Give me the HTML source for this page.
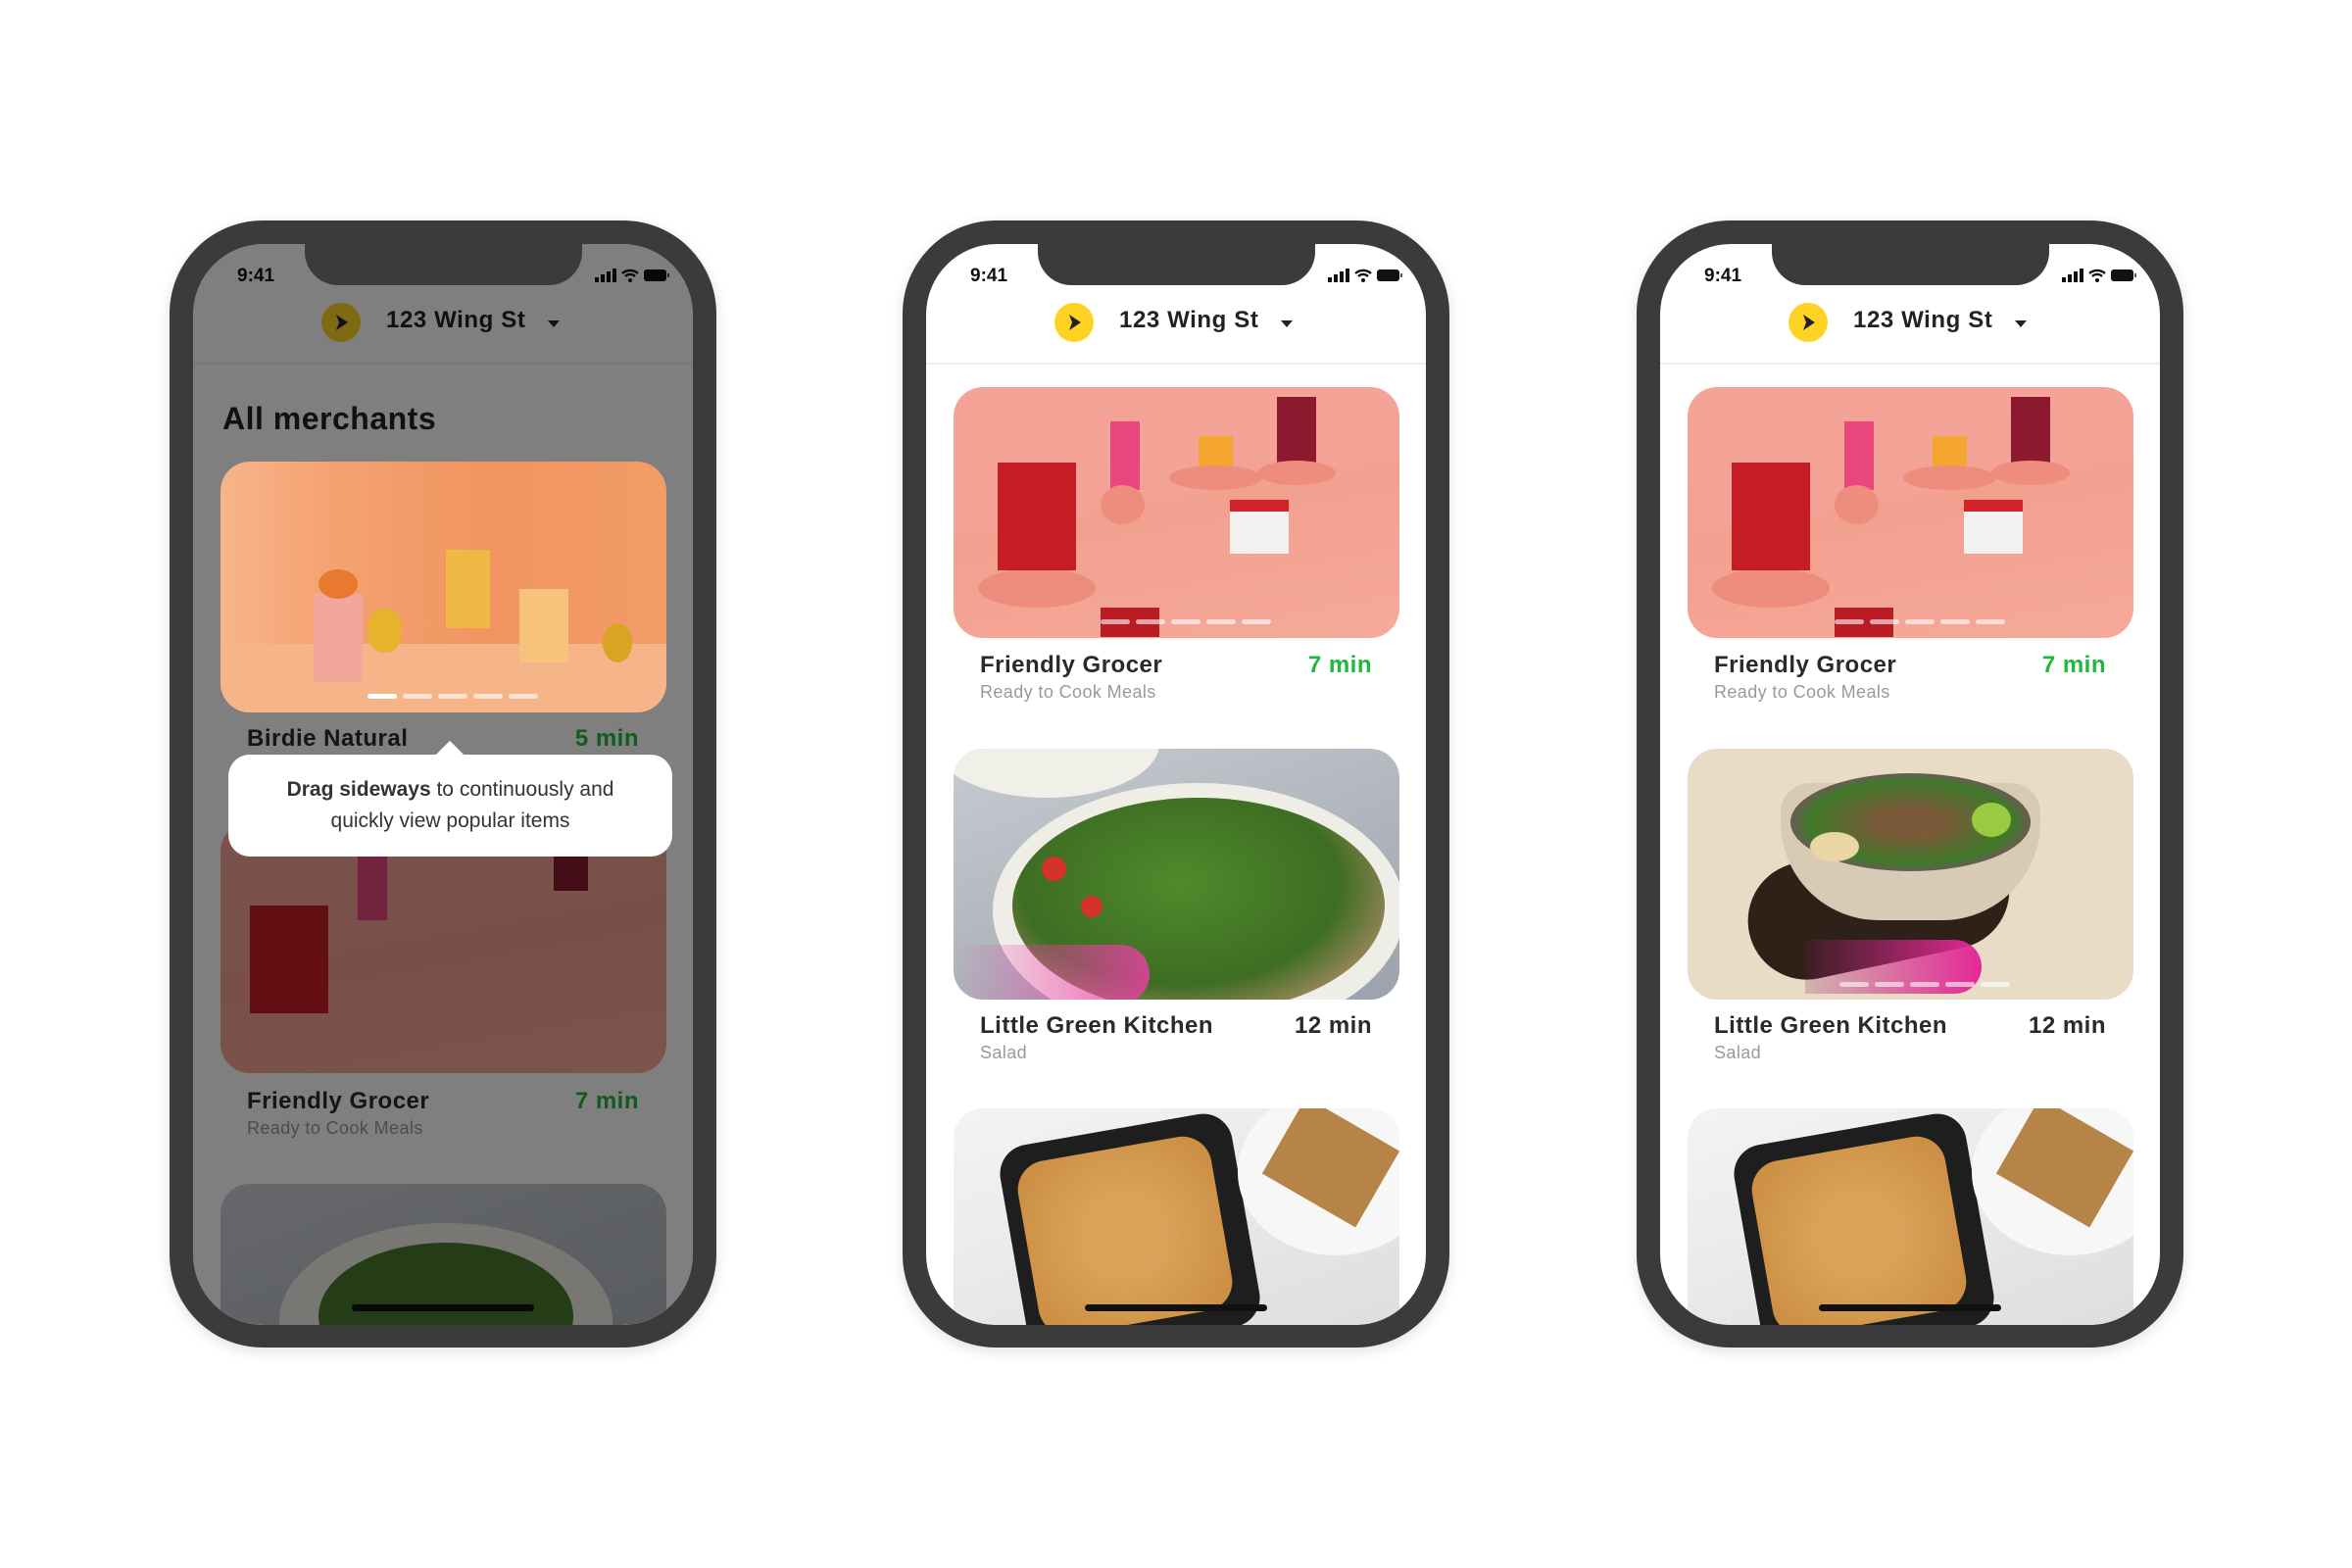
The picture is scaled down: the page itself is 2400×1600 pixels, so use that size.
<!DOCTYPE html>
<html><head><meta charset="utf-8"><style>
*{margin:0;padding:0;box-sizing:border-box}
body{width:2400px;height:1600px;background:#fff;position:relative;overflow:hidden;font-family:"Liberation Sans",sans-serif}
.phone{position:absolute;top:225px;width:558px;height:1150px;background:#3b3b3b;border-radius:95px;box-shadow:0 4px 14px rgba(0,0,0,.12)}
.screen{position:absolute;left:24px;top:24px;width:510px;height:1103px;background:#fff;border-radius:72px;overflow:hidden}
.notch{position:absolute;left:114px;top:-2px;width:283px;height:44px;background:#3b3b3b;border-radius:0 0 34px 34px;z-index:8}
.time{position:absolute;left:45px;top:22px;font-size:19px;font-weight:bold;color:#111}
.stat{position:absolute;right:24px;top:24px}
.logo{position:absolute;left:131px;top:60px;width:40px;height:40px;border-radius:50%;background:#ffd324}
.addr{position:absolute;left:197px;top:64px;font-size:24px;font-weight:bold;color:#222;letter-spacing:.6px}
.caret{position:absolute;left:362px;top:78px;width:0;height:0;border-left:6px solid transparent;border-right:6px solid transparent;border-top:7px solid #222}
.div{position:absolute;left:0;right:0;top:121px;height:2px;background:#eee}
.card{position:absolute;left:28px;width:455px;height:256px;border-radius:30px;overflow:hidden}
.t{position:absolute;left:55px;font-size:24px;font-weight:bold;color:#2a2a2a;letter-spacing:.5px}
.m{position:absolute;right:55px;font-size:24px;font-weight:bold;letter-spacing:.5px}
.s{position:absolute;left:55px;font-size:18px;color:#999;letter-spacing:.4px}
.home{position:absolute;left:162px;bottom:14px;width:186px;height:7px;border-radius:4px;background:#111;z-index:4}
.grocer{background:linear-gradient(170deg,#f4a397 0%,#f3a396 45%,#f2a08f 46%,#f6a99a 100%)}
.dots{position:absolute;left:150px;bottom:14px;display:flex;gap:6px}
.dots i{display:block;width:30px;height:5px;border-radius:3px;background:rgba(255,255,255,.6)}
</style></head><body>

<!-- Phone 1 -->
<div class="phone" style="left:173px">
 <div class="screen">
  <div class="notch"></div>
  <div class="time">9:41</div>
  <svg class="stat" width="76" height="16" viewBox="0 0 76 16"><rect x="0" y="10" width="4" height="5" fill="#111"/><rect x="6" y="7" width="4" height="8" fill="#111"/><rect x="12" y="4" width="4" height="11" fill="#111"/><rect x="18" y="1" width="4" height="14" fill="#111"/><path d="M28 6a12 12 0 0 1 16 0M31 9a7 7 0 0 1 10 0" stroke="#111" stroke-width="2.4" fill="none"/><circle cx="36" cy="13" r="2" fill="#111"/><rect x="50" y="2" width="23" height="12" rx="3" fill="#111"/><rect x="74" y="6" width="2" height="4" fill="#555"/></svg>
  <div class="logo"><svg width="40" height="40"><path d="M15 12l12 8-12 8 3-8z" fill="#222"/></svg></div>
  <div class="addr">123 Wing St</div><div class="caret"></div>
  <div class="div"></div>
  <div style="position:absolute;left:30px;top:160px;font-size:32px;font-weight:bold;color:#222;letter-spacing:.5px">All merchants</div>
  <div class="t" style="top:491px">Birdie Natural</div>
  <div class="m" style="top:491px;color:#1fb83c">5 min</div>
  <div class="card grocer" style="top:590px">
   <div style="position:absolute;left:30px;top:85px;width:80px;height:110px;background:#c51d25"></div>
   <div style="position:absolute;left:140px;top:20px;width:30px;height:80px;background:#e9467f"></div>
   <div style="position:absolute;left:340px;top:-10px;width:35px;height:80px;background:#8b1a2f"></div>
  </div>
  <div class="t" style="top:861px">Friendly Grocer</div>
  <div class="m" style="top:861px;color:#1fb83c">7 min</div>
  <div class="s" style="top:892px">Ready to Cook Meals</div>
  <div class="card" style="top:959px;background:linear-gradient(160deg,#ccd0d6,#a9afb8)">
   <div style="position:absolute;left:60px;top:40px;width:340px;height:200px;border-radius:50%;background:#f0efe8"></div>
   <div style="position:absolute;left:100px;top:60px;width:260px;height:150px;border-radius:50%;background:#4a7a2e"></div>
  </div>
  <div class="home"></div>
  <div style="position:absolute;inset:0;background:rgba(0,0,0,.5);z-index:6"></div>
  <div class="card" style="top:222px;z-index:7;background:linear-gradient(90deg,#f7b48a 0%,#f5a271 25%,#f19560 60%,#f39c68 100%)">
   <div style="position:absolute;left:0;right:0;bottom:0;height:70px;background:#f6b589"></div>
   <div style="position:absolute;left:95px;top:135px;width:50px;height:90px;background:#f3a69c"></div>
   <div style="position:absolute;left:100px;top:110px;width:40px;height:30px;border-radius:50%;background:#e8792e"></div>
   <div style="position:absolute;left:150px;top:150px;width:35px;height:45px;border-radius:45%;background:#e7b22c"></div>
   <div style="position:absolute;left:230px;top:90px;width:45px;height:80px;background:#efb948"></div>
   <div style="position:absolute;left:305px;top:130px;width:50px;height:75px;background:#f7c37c"></div>
   <div style="position:absolute;left:390px;top:165px;width:30px;height:40px;border-radius:50%;background:#d9a422"></div>
   <div class="dots" style="left:150px"><i style="background:#fff"></i><i></i><i></i><i></i><i></i></div>
  </div>
  <div style="position:absolute;left:36px;top:521px;width:453px;height:104px;background:#fff;border-radius:22px;z-index:7;text-align:center;font-size:21px;line-height:32px;color:#333;padding-top:20px"><b>Drag sideways</b> to continuously and<br>quickly view popular items
   <div style="position:absolute;left:216px;top:-10px;width:20px;height:20px;background:#fff;transform:rotate(45deg)"></div></div>
 </div>
</div>

<!-- Phone 2 -->
<div class="phone" style="left:921px">
 <div class="screen">
  <div class="notch"></div>
  <div class="time">9:41</div>
  <svg class="stat" width="76" height="16" viewBox="0 0 76 16"><rect x="0" y="10" width="4" height="5" fill="#111"/><rect x="6" y="7" width="4" height="8" fill="#111"/><rect x="12" y="4" width="4" height="11" fill="#111"/><rect x="18" y="1" width="4" height="14" fill="#111"/><path d="M28 6a12 12 0 0 1 16 0M31 9a7 7 0 0 1 10 0" stroke="#111" stroke-width="2.4" fill="none"/><circle cx="36" cy="13" r="2" fill="#111"/><rect x="50" y="2" width="23" height="12" rx="3" fill="#111"/><rect x="74" y="6" width="2" height="4" fill="#555"/></svg>
  <div class="logo"><svg width="40" height="40"><path d="M15 12l12 8-12 8 3-8z" fill="#222"/></svg></div>
  <div class="addr">123 Wing St</div><div class="caret"></div>
  <div class="div"></div>
  <div class="card grocer" style="top:146px">
   <div style="position:absolute;left:25px;top:185px;width:120px;height:40px;border-radius:50%;background:#ee8d7d"></div>
   <div style="position:absolute;left:45px;top:77px;width:80px;height:110px;background:#c51d25"></div>
   <div style="position:absolute;left:160px;top:35px;width:30px;height:70px;background:#e9467f"></div>
   <div style="position:absolute;left:150px;top:100px;width:45px;height:40px;border-radius:50%;background:#ee8d7d"></div>
   <div style="position:absolute;left:250px;top:50px;width:35px;height:35px;background:#f4a62f"></div>
   <div style="position:absolute;left:220px;top:80px;width:95px;height:25px;border-radius:50%;background:#ee8d7d"></div>
   <div style="position:absolute;left:330px;top:10px;width:40px;height:70px;background:#8b1a2f"></div>
   <div style="position:absolute;left:310px;top:75px;width:80px;height:25px;border-radius:50%;background:#ee8d7d"></div>
   <div style="position:absolute;left:282px;top:115px;width:60px;height:55px;background:#f3f0f0;border-top:12px solid #d2232a"></div>
   <div style="position:absolute;left:150px;top:225px;width:60px;height:30px;background:#b91c24"></div>
   <div class="dots" style="left:150px"><i></i><i></i><i></i><i></i><i></i></div>
  </div>
  <div class="t" style="top:416px">Friendly Grocer</div>
  <div class="m" style="top:416px;color:#1fb83c">7 min</div>
  <div class="s" style="top:447px">Ready to Cook Meals</div>
  <div class="card" style="top:515px;background:linear-gradient(160deg,#c7cbd1,#9ca2ab)">
   <div style="position:absolute;left:-20px;top:-60px;width:230px;height:110px;border-radius:50%;background:#f0efe8"></div>
   <div style="position:absolute;left:40px;top:35px;width:420px;height:260px;border-radius:50%;background:#eeede6"></div>
   <div style="position:absolute;left:60px;top:50px;width:380px;height:220px;border-radius:50%;background:radial-gradient(ellipse at 45% 40%,#4f8a2c,#3d6d22 55%,#a88b64 80%)"></div>
   <div style="position:absolute;left:90px;top:110px;width:25px;height:25px;border-radius:50%;background:#d7322a"></div>
   <div style="position:absolute;left:130px;top:150px;width:22px;height:22px;border-radius:50%;background:#d7322a"></div>
   <div style="position:absolute;left:0;top:200px;width:200px;height:60px;border-radius:0 30px 30px 0;background:linear-gradient(90deg,rgba(255,80,200,0),rgba(240,60,170,.8))"></div>
  </div>
  <div class="t" style="top:784px">Little Green Kitchen</div>
  <div class="m" style="top:784px;color:#2a2a2a">12 min</div>
  <div class="s" style="top:815px">Salad</div>
  <div class="card" style="top:882px;background:linear-gradient(160deg,#f4f4f4,#dcdcdc)">
   <div style="position:absolute;left:60px;top:20px;width:240px;height:220px;border-radius:30px;background:#1e1e1e;transform:rotate(-10deg)"></div>
   <div style="position:absolute;left:75px;top:40px;width:200px;height:180px;border-radius:30px;background:radial-gradient(circle,#d9a35a 30%,#c98b3f 100%);transform:rotate(-10deg)"></div>
   <div style="position:absolute;left:290px;top:-20px;width:200px;height:170px;border-radius:50%;background:#f7f7f7"></div>
   <div style="position:absolute;left:330px;top:10px;width:110px;height:90px;background:#b68446;transform:rotate(30deg)"></div>
  </div>
  <div class="home"></div>
 </div>
</div>

<!-- Phone 3 -->
<div class="phone" style="left:1670px">
 <div class="screen">
  <div class="notch"></div>
  <div class="time">9:41</div>
  <svg class="stat" width="76" height="16" viewBox="0 0 76 16"><rect x="0" y="10" width="4" height="5" fill="#111"/><rect x="6" y="7" width="4" height="8" fill="#111"/><rect x="12" y="4" width="4" height="11" fill="#111"/><rect x="18" y="1" width="4" height="14" fill="#111"/><path d="M28 6a12 12 0 0 1 16 0M31 9a7 7 0 0 1 10 0" stroke="#111" stroke-width="2.4" fill="none"/><circle cx="36" cy="13" r="2" fill="#111"/><rect x="50" y="2" width="23" height="12" rx="3" fill="#111"/><rect x="74" y="6" width="2" height="4" fill="#555"/></svg>
  <div class="logo"><svg width="40" height="40"><path d="M15 12l12 8-12 8 3-8z" fill="#222"/></svg></div>
  <div class="addr">123 Wing St</div><div class="caret"></div>
  <div class="div"></div>
  <div class="card grocer" style="top:146px">
   <div style="position:absolute;left:25px;top:185px;width:120px;height:40px;border-radius:50%;background:#ee8d7d"></div>
   <div style="position:absolute;left:45px;top:77px;width:80px;height:110px;background:#c51d25"></div>
   <div style="position:absolute;left:160px;top:35px;width:30px;height:70px;background:#e9467f"></div>
   <div style="position:absolute;left:150px;top:100px;width:45px;height:40px;border-radius:50%;background:#ee8d7d"></div>
   <div style="position:absolute;left:250px;top:50px;width:35px;height:35px;background:#f4a62f"></div>
   <div style="position:absolute;left:220px;top:80px;width:95px;height:25px;border-radius:50%;background:#ee8d7d"></div>
   <div style="position:absolute;left:330px;top:10px;width:40px;height:70px;background:#8b1a2f"></div>
   <div style="position:absolute;left:310px;top:75px;width:80px;height:25px;border-radius:50%;background:#ee8d7d"></div>
   <div style="position:absolute;left:282px;top:115px;width:60px;height:55px;background:#f3f0f0;border-top:12px solid #d2232a"></div>
   <div style="position:absolute;left:150px;top:225px;width:60px;height:30px;background:#b91c24"></div>
   <div class="dots" style="left:150px"><i></i><i></i><i></i><i></i><i></i></div>
  </div>
  <div class="t" style="top:416px">Friendly Grocer</div>
  <div class="m" style="top:416px;color:#1fb83c">7 min</div>
  <div class="s" style="top:447px">Ready to Cook Meals</div>
  <div class="card" style="top:515px;background:#e8dcc6">
   <div style="position:absolute;left:60px;top:100px;width:270px;height:120px;border-radius:60px;background:#2d2118;transform:rotate(-12deg)"></div>
   <div style="position:absolute;left:95px;top:35px;width:265px;height:140px;border-radius:30px 30px 100px 100px;background:#d8cbb5"></div>
   <div style="position:absolute;left:105px;top:25px;width:245px;height:100px;border-radius:50%;background:radial-gradient(ellipse,#7a5a3a 20%,#3f7a2a 60%,#a0338a 85%)"></div>
   <div style="position:absolute;left:125px;top:85px;width:50px;height:30px;border-radius:50%;background:#ead6a4"></div>
   <div style="position:absolute;left:290px;top:55px;width:40px;height:35px;border-radius:50%;background:#9ac942"></div>
   <div style="position:absolute;left:120px;top:195px;width:180px;height:55px;border-radius:0 30px 30px 0;background:linear-gradient(90deg,rgba(120,20,80,.2),#e22995)"></div>
   <div class="dots" style="left:155px;bottom:13px"><i></i><i></i><i></i><i></i><i></i></div>
  </div>
  <div class="t" style="top:784px">Little Green Kitchen</div>
  <div class="m" style="top:784px;color:#2a2a2a">12 min</div>
  <div class="s" style="top:815px">Salad</div>
  <div class="card" style="top:882px;background:linear-gradient(160deg,#f4f4f4,#dcdcdc)">
   <div style="position:absolute;left:60px;top:20px;width:240px;height:220px;border-radius:30px;background:#1e1e1e;transform:rotate(-10deg)"></div>
   <div style="position:absolute;left:75px;top:40px;width:200px;height:180px;border-radius:30px;background:radial-gradient(circle,#d9a35a 30%,#c98b3f 100%);transform:rotate(-10deg)"></div>
   <div style="position:absolute;left:290px;top:-20px;width:200px;height:170px;border-radius:50%;background:#f7f7f7"></div>
   <div style="position:absolute;left:330px;top:10px;width:110px;height:90px;background:#b68446;transform:rotate(30deg)"></div>
  </div>
  <div class="home"></div>
 </div>
</div>
</body></html>
